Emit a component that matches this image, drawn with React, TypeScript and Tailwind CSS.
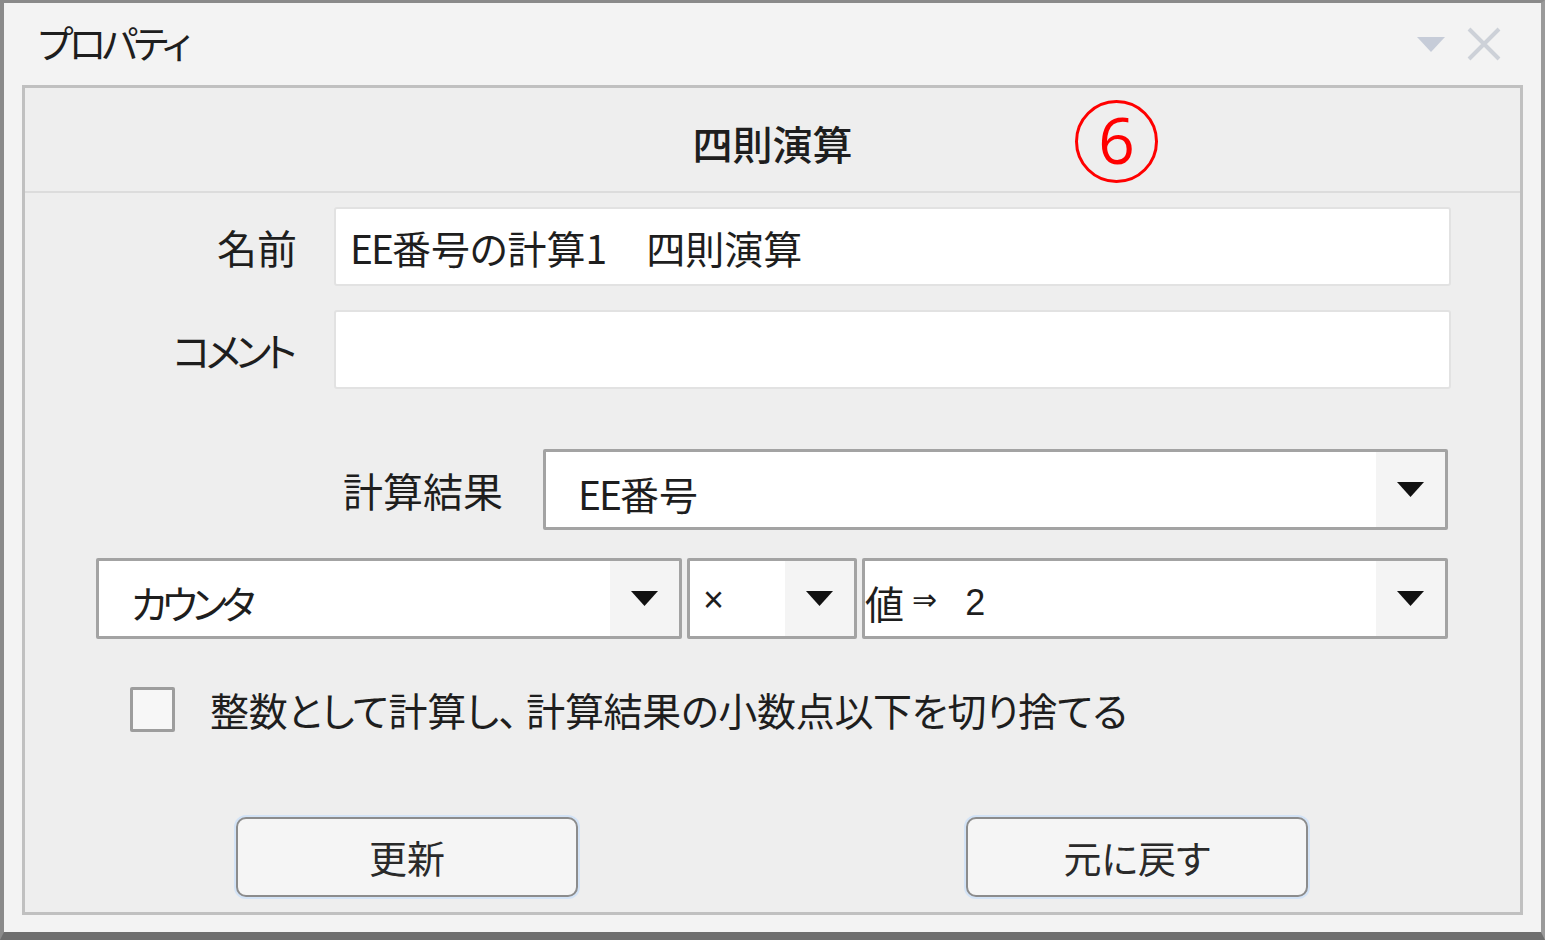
import React from "react";

/**
 * プロパティ dialog - 四則演算 node settings
 */

const jp = "font-['Meiryo_UI','Noto_Sans_CJK_JP',sans-serif] [font-feature-settings:'palt']";

function Caret() {
  return (
    <svg width="27" height="15" viewBox="0 0 27 15">
      <path d="M0 0 H27 L13.5 15 Z" fill="#111" />
    </svg>
  );
}

interface SelectBoxProps {
  children: React.ReactNode;
  width: string;
  textClass?: string;
}

function SelectBox({ children, width, textClass = "pl-[32px]" }: SelectBoxProps) {
  return (
    <div
      className={`${width} h-[81px] flex border-[3px] border-[#a3a3a3] rounded-[2px] bg-white`}
    >
      <div className={`flex-1 flex items-center ${textClass} text-[39px] leading-none text-[#1e1e1e] pt-[8px]`}>
        {children}
      </div>
      <div className="w-[69px] h-full bg-[#f4f4f4] flex items-center justify-center">
        <Caret />
      </div>
    </div>
  );
}

export default function App() {
  return (
    <div className={`w-[1545px] h-[940px] ${jp} text-[#1e1e1e]`}>
      {/* Window frame */}
      <div className="w-full h-full flex flex-col bg-[#f3f3f3] border-t-[3px] border-l-[4px] border-r-[4px] border-b-[8px] border-t-[#8a8a8a] border-l-[#8a8a8a] border-r-[#9a9a9a] border-b-[#6e6e6e]">
        {/* Title bar */}
        <div className="h-[82px] flex items-center pl-[34px] pr-[40px]">
          <div className="text-[38px] leading-none tracking-[-4px] pb-[4px]">プロパティ</div>
          <div className="ml-auto flex items-center gap-[22px]">
            <svg width="28" height="15" viewBox="0 0 28 15">
              <path d="M0 0 H28 L14 15 Z" fill="#c6ccd8" />
            </svg>
            <svg width="34" height="34" viewBox="0 0 34 34">
              <path d="M2 2 L32 32 M32 2 L2 32" stroke="#cdd1d8" strokeWidth="4" />
            </svg>
          </div>
        </div>

        {/* Content panel */}
        <div className="flex-1 mx-[18px] mb-[17px] flex flex-col border-[3px] border-[#c0c0c0] bg-[#eeeeee]">
          <div className="relative h-[105px] flex items-center justify-center border-b-[2px] border-[#dcdcdc]">
            <div className="text-[40px] leading-none font-medium pt-[6px]">四則演算</div>
            <div className="absolute left-[1050px] top-[12px] w-[83px] h-[83px] rounded-full border-[3px] border-[#ff0000] flex items-center justify-center text-[#ff0000] text-[64px] leading-none font-['Open_Sans',sans-serif] pb-[4px]">
              6
            </div>
          </div>

          <div className="flex flex-col pl-[71px] pt-[14px]">
            {/* 名前 */}
            <div className="flex items-center">
              <div className="w-[201px] text-right text-[40px] leading-none">名前</div>
              <div className="ml-[37px] w-[1117px] h-[79px] bg-white border-[2px] border-[#e2e2e2] rounded-[3px] flex items-center pl-[14px] text-[39px] leading-none pt-[2px]">
                <span className="tracking-[-2px]">EE</span>
                <span>番号の計算1　四則演算</span>
              </div>
            </div>

            {/* コメント */}
            <div className="flex items-center mt-[24px]">
              <div className="w-[201px] text-right text-[40px] leading-none tracking-[-5px] pr-[5px]">コメント</div>
              <div className="ml-[37px] w-[1117px] h-[79px] bg-white border-[2px] border-[#e2e2e2] rounded-[3px]" />
            </div>

            {/* 計算結果 */}
            <div className="flex items-center mt-[60px]">
              <div className="w-[407px] text-right text-[40px] leading-none">計算結果</div>
              <div className="ml-[40px]">
                <SelectBox width="w-[905px]">
                  <span className="tracking-[-2px]">EE</span>
                  <span>番号</span>
                </SelectBox>
              </div>
            </div>

            {/* Expression */}
            <div className="flex mt-[28px] gap-[5px]">
              <SelectBox width="w-[586px]">
                <span className="tracking-[-5px]">カウンタ</span>
              </SelectBox>
              <SelectBox width="w-[170px]" textClass="pl-[13px]">
                <span className="text-[36px] font-['Liberation_Sans',sans-serif] pb-[6px]">×</span>
              </SelectBox>
              <SelectBox width="w-[586px]" textClass="pl-0">
                <span>値</span>
                <span className="text-[30px] ml-[8px] pb-[6px] font-['DejaVu_Sans',sans-serif]">⇒</span>
                <span className="ml-[28px] font-['Liberation_Sans',sans-serif] text-[36px]">2</span>
              </SelectBox>
            </div>

            {/* Checkbox */}
            <div className="flex items-center mt-[48px] ml-[34px]">
              <div className="w-[45px] h-[45px] border-[3px] border-[#9d9d9d] bg-[#f7f7f7] rounded-[2px]" />
              <div className="ml-[35px] text-[39px] leading-none tracking-[-0.3px]">
                整数として計算し、 計算結果の小数点以下を切り捨てる
              </div>
            </div>

            {/* Buttons */}
            <div className="flex mt-[85px] ml-[140px] gap-[388px]">
              {["更新", "元に戻す"].map((label) => (
                <button
                  key={label}
                  className="w-[342px] h-[80px] bg-[#f5f5f5] border-[2px] border-[#8c8c8c] rounded-[10px] shadow-[0_0_0_2px_#d3e3f6] flex items-center justify-center text-[38px] leading-none text-[#2a2a2a]"
                >
                  {label}
                </button>
              ))}
            </div>
          </div>
        </div>
      </div>
    </div>
  );
}
